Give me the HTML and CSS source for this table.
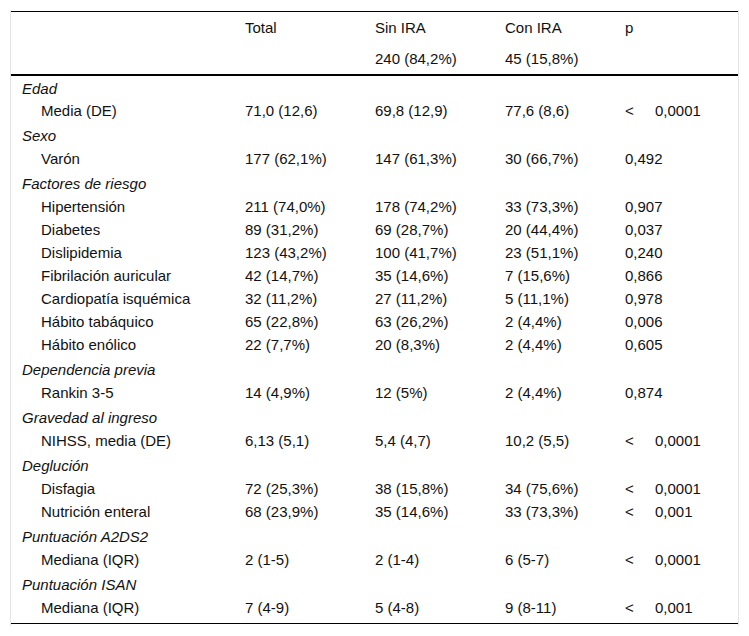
FILE: index.html
```html
<!DOCTYPE html>
<html lang="es">
<head>
<meta charset="utf-8">
<link rel="stylesheet" href="styles.css">
</head>
<body>
<div class="frame">
<table class="tbl">
<colgroup>
<col class="c-label"><col class="c-total"><col class="c-sin"><col class="c-con"><col class="c-p">
</colgroup>
<thead>
<tr class="h1"><th></th><th>Total</th><th>Sin IRA</th><th>Con IRA</th><th>p</th></tr>
<tr class="h2"><th></th><th></th><th>240 (84,2%)</th><th>45 (15,8%)</th><th></th></tr>
</thead>
<tbody>
<tr class="cat first"><td colspan="5">Edad</td></tr>
<tr><td class="sub">Media (DE)</td><td>71,0 (12,6)</td><td>69,8 (12,9)</td><td>77,6 (8,6)</td><td><span class="lt">&lt;</span>0,0001</td></tr>
<tr class="cat"><td colspan="5">Sexo</td></tr>
<tr><td class="sub">Varón</td><td>177 (62,1%)</td><td>147 (61,3%)</td><td>30 (66,7%)</td><td>0,492</td></tr>
<tr class="cat"><td colspan="5">Factores de riesgo</td></tr>
<tr><td class="sub">Hipertensión</td><td>211 (74,0%)</td><td>178 (74,2%)</td><td>33 (73,3%)</td><td>0,907</td></tr>
<tr><td class="sub">Diabetes</td><td>89 (31,2%)</td><td>69 (28,7%)</td><td>20 (44,4%)</td><td>0,037</td></tr>
<tr><td class="sub">Dislipidemia</td><td>123 (43,2%)</td><td>100 (41,7%)</td><td>23 (51,1%)</td><td>0,240</td></tr>
<tr><td class="sub">Fibrilación auricular</td><td>42 (14,7%)</td><td>35 (14,6%)</td><td>7 (15,6%)</td><td>0,866</td></tr>
<tr><td class="sub">Cardiopatía isquémica</td><td>32 (11,2%)</td><td>27 (11,2%)</td><td>5 (11,1%)</td><td>0,978</td></tr>
<tr><td class="sub">Hábito tabáquico</td><td>65 (22,8%)</td><td>63 (26,2%)</td><td>2 (4,4%)</td><td>0,006</td></tr>
<tr><td class="sub">Hábito enólico</td><td>22 (7,7%)</td><td>20 (8,3%)</td><td>2 (4,4%)</td><td>0,605</td></tr>
<tr class="cat"><td colspan="5">Dependencia previa</td></tr>
<tr><td class="sub">Rankin 3-5</td><td>14 (4,9%)</td><td>12 (5%)</td><td>2 (4,4%)</td><td>0,874</td></tr>
<tr class="cat"><td colspan="5">Gravedad al ingreso</td></tr>
<tr><td class="sub">NIHSS, media (DE)</td><td>6,13 (5,1)</td><td>5,4 (4,7)</td><td>10,2 (5,5)</td><td><span class="lt">&lt;</span>0,0001</td></tr>
<tr class="cat"><td colspan="5">Deglución</td></tr>
<tr><td class="sub">Disfagia</td><td>72 (25,3%)</td><td>38 (15,8%)</td><td>34 (75,6%)</td><td><span class="lt">&lt;</span>0,0001</td></tr>
<tr><td class="sub">Nutrición enteral</td><td>68 (23,9%)</td><td>35 (14,6%)</td><td>33 (73,3%)</td><td><span class="lt">&lt;</span>0,001</td></tr>
<tr class="cat"><td colspan="5">Puntuación A2DS2</td></tr>
<tr><td class="sub">Mediana (IQR)</td><td>2 (1-5)</td><td>2 (1-4)</td><td>6 (5-7)</td><td><span class="lt">&lt;</span>0,0001</td></tr>
<tr class="cat"><td colspan="5">Puntuación ISAN</td></tr>
<tr class="last"><td class="sub">Mediana (IQR)</td><td>7 (4-9)</td><td>5 (4-8)</td><td>9 (8-11)</td><td><span class="lt">&lt;</span>0,001</td></tr>
</tbody>
</table>
</div>
</body>
</html>
```

FILE: styles.css
```css
html, body {
  margin: 0;
  padding: 0;
  background: #ffffff;
}
body {
  font-family: "Liberation Sans", Arial, sans-serif;
  font-size: 15px;
  color: #111111;
}
.frame {
  margin: 10px 0 0 10px;
  width: 727px;
  padding: 1px 0 2px 0;
  border-left: 1px solid #e4e4e4;
  border-right: 1px solid #e4e4e4;
}
.tbl {
  width: 727px;
  border-collapse: collapse;
  table-layout: fixed;
  border-top: 1px solid #000;
  border-bottom: 1px solid #000;
}
.c-label { width: 224px; }
.c-total { width: 130px; }
.c-sin { width: 130px; }
.c-con { width: 120px; }
.c-p { width: 123px; }
.tbl th, .tbl td {
  text-align: left;
  font-weight: normal;
  line-height: 17px;
  padding: 3px 10px;
  white-space: nowrap;
  vertical-align: top;
}
.tbl thead th {
  padding: 7px 10px;
}
.tbl thead tr.h2 th {
  border-bottom: 2px solid #000;
}
.tbl td:first-child, .tbl th:first-child {
  padding-left: 11px;
}
.tbl tr.cat td {
  font-style: italic;
  padding-top: 5px;
}
.tbl tr.cat.first td {
  padding-top: 4px;
  padding-bottom: 2px;
}
.tbl td.sub {
  padding-left: 30px;
}
.tbl tr.last td {
  padding-bottom: 7px;
}
.lt {
  display: inline-block;
  width: 30px;
}
```
